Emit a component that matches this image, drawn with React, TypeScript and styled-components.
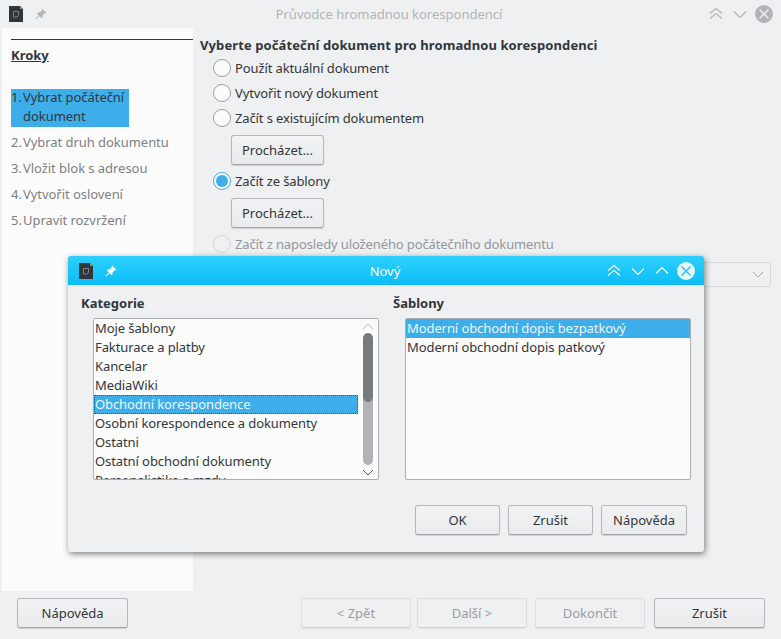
import React from "react";
import styled, { createGlobalStyle } from "styled-components";

const Global = createGlobalStyle`
  html, body { margin: 0; padding: 0; width: 781px; height: 639px; overflow: hidden; background: #eff0f1; }
  body { font-family: "Noto Sans", "Open Sans", sans-serif; font-size: 13px; color: #31363b; }
  * { box-sizing: border-box; }
`;

const Win = styled.div`
  position: relative; width: 781px; height: 639px; display: flex; flex-direction: column; background: #eff0f1;
`;
const TitleBar = styled.div<{ $active?: boolean }>`
  height: ${p => (p.$active ? 29 : 28)}px; flex: none;
  display: grid; grid-template-columns: 1fr auto 1fr; align-items: center;
  padding: 0 ${p => (p.$active ? 9 : 8)}px 0 ${p => (p.$active ? 11 : 9)}px;
  ${p => p.$active
    ? `background: linear-gradient(#2dd0fd, #0cbcf6); color: #fff; border-radius: 3px 3px 0 0;`
    : `color: #b1b4b7;`}
`;
const TitleLeft = styled.div`display: flex; align-items: center; gap: 12px;`;
const TitleText = styled.div`text-align: center; padding-right: 4px;`;
const TitleRight = styled.div`
  display: flex; align-items: center; gap: 6px; justify-content: flex-end;
`;
const Body = styled.div`flex: 1; display: flex; min-height: 0; padding-left: 2px;`;
const Side = styled.aside`
  width: 191px; height: 563px; background: #fcfcfc; padding: 11px 0 0 9px; flex: none;
`;
const SideHead = styled.div`
  border-top: 1px solid #31363b; height: 50px; padding-top: 5px; font-weight: 700; text-decoration: underline;
  line-height: 20px;
`;
const Step = styled.div<{ $on?: boolean }>`
  display: flex; width: ${p => (p.$on ? 118 : 182)}px; height: ${p => (p.$on ? 38 : 19)}px; line-height: 19px;
  margin-bottom: 7px; letter-spacing: -0.05px; color: ${p => (p.$on ? "#31363b" : "#7d8083")};
  background: ${p => (p.$on ? "#3daee9" : "transparent")};
`;
const StepNum = styled.span`width: 12px; flex: none; margin-top: -1px;`;
const StepText = styled.span`margin-top: -1px;`;
const Main = styled.main`flex: 1; padding: 7px 0 0 7px; display: flex; flex-direction: column;`;
const Heading = styled.div`font-weight: 700; line-height: 20px; height: 20px; letter-spacing: 0.1px;`;
const Opt = styled.div<{ $off?: boolean }>`
  display: flex; align-items: center; gap: 4px; height: 25px; padding-left: 13px; letter-spacing: -0.12px;
  color: ${p => (p.$off ? "#94979a" : "#31363b")};
`;
const Radio = styled.span<{ $on?: boolean; $off?: boolean }>`
  width: 18px; height: 18px; border-radius: 50%; flex: none; display: flex; align-items: center; justify-content: center;
  background: ${p => (p.$off ? "#eff0f1" : "#fcfcfc")};
  border: 1px solid ${p => (p.$on ? "#3daee9" : p.$off ? "#d3d5d6" : "#9a9d9f")};
  &::after { content: ""; width: 12px; height: 12px; border-radius: 50%; background: ${p => (p.$on ? "#3daee9" : "transparent")}; }
`;
const Btn = styled.button<{ $w: number; $off?: boolean }>`
  width: ${p => p.$w}px; height: 30px; font: inherit; font-size: 13px; padding: 0; flex: none;
  color: ${p => (p.$off ? "#9a9d9f" : "#31363b")};
  border: 1px solid ${p => (p.$off ? "#dcdee0" : "#b6b9bc")}; border-bottom-color: ${p => (p.$off ? "#d2d4d6" : "#a3a6a9")};
  border-radius: 3px;
  background: ${p => (p.$off ? "#eff0f1" : "linear-gradient(#f2f3f4, #e9eaeb)")};
  box-shadow: 0 1px 1px rgba(0,0,0,${p => (p.$off ? 0.06 : 0.14)});
`;
const BrowseRow = styled.div`padding: 5px 0 0 31px; height: 38px;`;
const TemplateSelect = styled.div`
  margin: 6px 10px 0 auto; width: 300px; height: 25px; display: flex; align-items: center; justify-content: flex-end;
  padding-right: 6px; border: 1px solid #d8dadb; border-radius: 3px; background: #eff0f1; color: #a5a8aa;
`;
const Footer = styled.footer`
  height: 48px; flex: none; display: flex; padding: 7px 16px 0 17px;
`;
const FooterNav = styled.div`margin-left: auto; display: flex; gap: 6px;`;
const FinishGroup = styled.div`display: flex; gap: 9px; margin-left: 2px;`;

const Modal = styled.section`
  position: absolute; left: 68px; top: 256px; width: 636px; height: 296px; background: #eff0f1; border-radius: 3px;
  box-shadow: 1px 2px 6px rgba(0,0,0,.5); display: flex; flex-direction: column;
`;
const ModalBody = styled.div`flex: 1; padding: 9px 13px 17px; display: flex; flex-direction: column;`;
const Cols = styled.div`display: grid; grid-template-columns: 298px 298px; gap: 14px; flex: none;`;
const ColLabel = styled.div`font-weight: 700; line-height: 19px; height: 24px;`;
const ListBox = styled.div`
  margin-left: 12px; width: 286px; height: 162px; background: #fcfcfc; border: 1px solid #abaeb1; border-radius: 2px;
  display: flex; overflow: hidden;
`;
const Rows = styled.div`flex: 1; min-width: 0; overflow: hidden;`;
const Row = styled.div<{ $sel?: boolean; $dash?: boolean }>`
  height: 19px; line-height: 19px; padding-left: 1px; white-space: nowrap; letter-spacing: -0.09px;
  color: ${p => (p.$sel ? "#eaf6fd" : "#31363b")};
  background: ${p => (p.$sel ? "#3daee9" : "transparent")};
  ${p => (p.$dash ? "outline: 1px dotted #1d5e80; outline-offset: -1px;" : "")}
`;
const Scroll = styled.div`
  width: 20px; flex: none; display: flex; flex-direction: column; align-items: center; padding: 4px 0 3px;
  color: #4d5256;
`;
const ScrollTop = styled.span`display: flex; color: #b9bcbe;`;
const Track = styled.div`
  flex: 1; width: 10px; margin: 3px 0 4px; background: #b1b3b6; border-radius: 5px; overflow: hidden;
`;
const Thumb = styled.div`height: 69px; background: #767b80; border-radius: 5px;`;
const ModalFoot = styled.div`margin-top: auto; display: flex; justify-content: flex-end; gap: 8px; padding-right: 4px;`;

const Doc = () => (
  <svg width="14" height="16" viewBox="0 0 14 16">
    <path d="M0 0h11L14 3v13H0z" fill="#31363b" />
    <path d="M11 0l3 3h-3z" fill="#8a9094" />
    <path d="M4.500 5.500h5v4l-1.500 1.500h-3.500z" fill="none" stroke="#7e8589" strokeWidth="1" />
  </svg>
);
const Pin = ({ c }: { c: string }) => (
  <svg width="12" height="12" viewBox="0 0 12 12">
    <path d="M7.200 .6L11.400 4.800 10.300 5.400 9.500 5.200 7.600 7.400 7.500 9.400 6.500 10.200 1.800 5.500 2.600 4.500 4.600 4.400 6.800 2.500 6.600 1.700Z" fill={c} />
    <path d="M4.200 7.800L.8 11.200" stroke={c} strokeWidth="1.200" />
  </svg>
);
const Chevrons = ({ kind, c }: { kind: "dbl" | "down" | "up"; c: string }) => (
  <svg width="18" height="18" viewBox="0 0 18 18" fill="none" stroke={c} strokeWidth="1.1">
    {kind === "dbl" && <path d="M3 8.500l6-5 6 5M3 13.500l6-5 6 5" />}
    {kind === "down" && <path d="M3 6.500l6 6 6-6" />}
    {kind === "up" && <path d="M3 11.500l6-6 6 6" />}
  </svg>
);
const Close = ({ bg, fg }: { bg: string; fg: string }) => (
  <svg width="18" height="18" viewBox="0 0 18 18">
    <circle cx="9" cy="9" r="9" fill={bg} />
    <path d="M4.500 4.500l9 9M13.500 4.500l-9 9" stroke={fg} strokeWidth="1.300" />
  </svg>
);
const SmallChev = ({ up }: { up?: boolean }) => (
  <svg width="12" height="7" viewBox="0 0 12 7" fill="none" stroke="currentColor" strokeWidth="1">
    <path d={up ? "M1 6l5-5 5 5" : "M1 1l5 5 5-5"} />
  </svg>
);

const steps = ["Vybrat druh dokumentu", "Vložit blok s adresou", "Vytvořit oslovení", "Upravit rozvržení"];
const cats = ["Moje šablony", "Fakturace a platby", "Kancelar", "MediaWiki", "Obchodní korespondence", "Osobní korespondence a dokumenty", "Ostatni", "Ostatní obchodní dokumenty", "Personalistika a mzdy"];

export default function App() {
  return (
    <Win>
      <Global />
      <TitleBar>
        <TitleLeft><Doc /><Pin c="#b4b7ba" /></TitleLeft>
        <TitleText>Průvodce hromadnou korespondencí</TitleText>
        <TitleRight>
          <Chevrons kind="dbl" c="#b1b4b7" />
          <Chevrons kind="down" c="#b1b4b7" />
          <Close bg="#b1b4b7" fg="#eff0f1" />
        </TitleRight>
      </TitleBar>
      <Body>
        <Side>
          <SideHead>Kroky</SideHead>
          <Step $on><StepNum>1.</StepNum><StepText>Vybrat počáteční dokument</StepText></Step>
          {steps.map((s, i) => (
            <Step key={s}><StepNum>{i + 2}.</StepNum><StepText>{s}</StepText></Step>
          ))}
        </Side>
        <Main>
          <Heading>Vyberte počáteční dokument pro hromadnou korespondenci</Heading>
          <Opt><Radio />Použít aktuální dokument</Opt>
          <Opt><Radio />Vytvořit nový dokument</Opt>
          <Opt><Radio />Začít s existujícím dokumentem</Opt>
          <BrowseRow><Btn $w={93}>Procházet...</Btn></BrowseRow>
          <Opt><Radio $on />Začít ze šablony</Opt>
          <BrowseRow><Btn $w={93}>Procházet...</Btn></BrowseRow>
          <Opt $off><Radio $off />Začít z naposledy uloženého počátečního dokumentu</Opt>
          <TemplateSelect><SmallChev /></TemplateSelect>
        </Main>
      </Body>
      <Footer>
        <Btn $w={111}>Nápověda</Btn>
        <FooterNav>
          <Btn $w={110} $off>&lt; Zpět</Btn>
          <Btn $w={110} $off>Další &gt;</Btn>
          <FinishGroup>
            <Btn $w={110} $off>Dokončit</Btn>
            <Btn $w={111}>Zrušit</Btn>
          </FinishGroup>
        </FooterNav>
      </Footer>
      <Modal>
        <TitleBar $active>
          <TitleLeft><Doc /><Pin c="#ffffff" /></TitleLeft>
          <TitleText>Nový</TitleText>
          <TitleRight>
            <Chevrons kind="dbl" c="#fff" />
            <Chevrons kind="down" c="#fff" />
            <Chevrons kind="up" c="#fff" />
            <Close bg="#e6f7fd" fg="#1cc3f7" />
          </TitleRight>
        </TitleBar>
        <ModalBody>
          <Cols>
            <div>
              <ColLabel>Kategorie</ColLabel>
              <ListBox>
                <Rows>
                  {cats.map(c => (
                    <Row key={c} $sel={c === "Obchodní korespondence"} $dash={c === "Obchodní korespondence"}>{c}</Row>
                  ))}
                </Rows>
                <Scroll>
                  <ScrollTop><SmallChev up /></ScrollTop>
                  <Track><Thumb /></Track>
                  <SmallChev />
                </Scroll>
              </ListBox>
            </div>
            <div>
              <ColLabel>Šablony</ColLabel>
              <ListBox>
                <Rows>
                  <Row $sel>Moderní obchodní dopis bezpatkový</Row>
                  <Row>Moderní obchodní dopis patkový</Row>
                </Rows>
              </ListBox>
            </div>
          </Cols>
          <ModalFoot>
            <Btn $w={85}>OK</Btn>
            <Btn $w={85}>Zrušit</Btn>
            <Btn $w={86}>Nápověda</Btn>
          </ModalFoot>
        </ModalBody>
      </Modal>
    </Win>
  );
}
